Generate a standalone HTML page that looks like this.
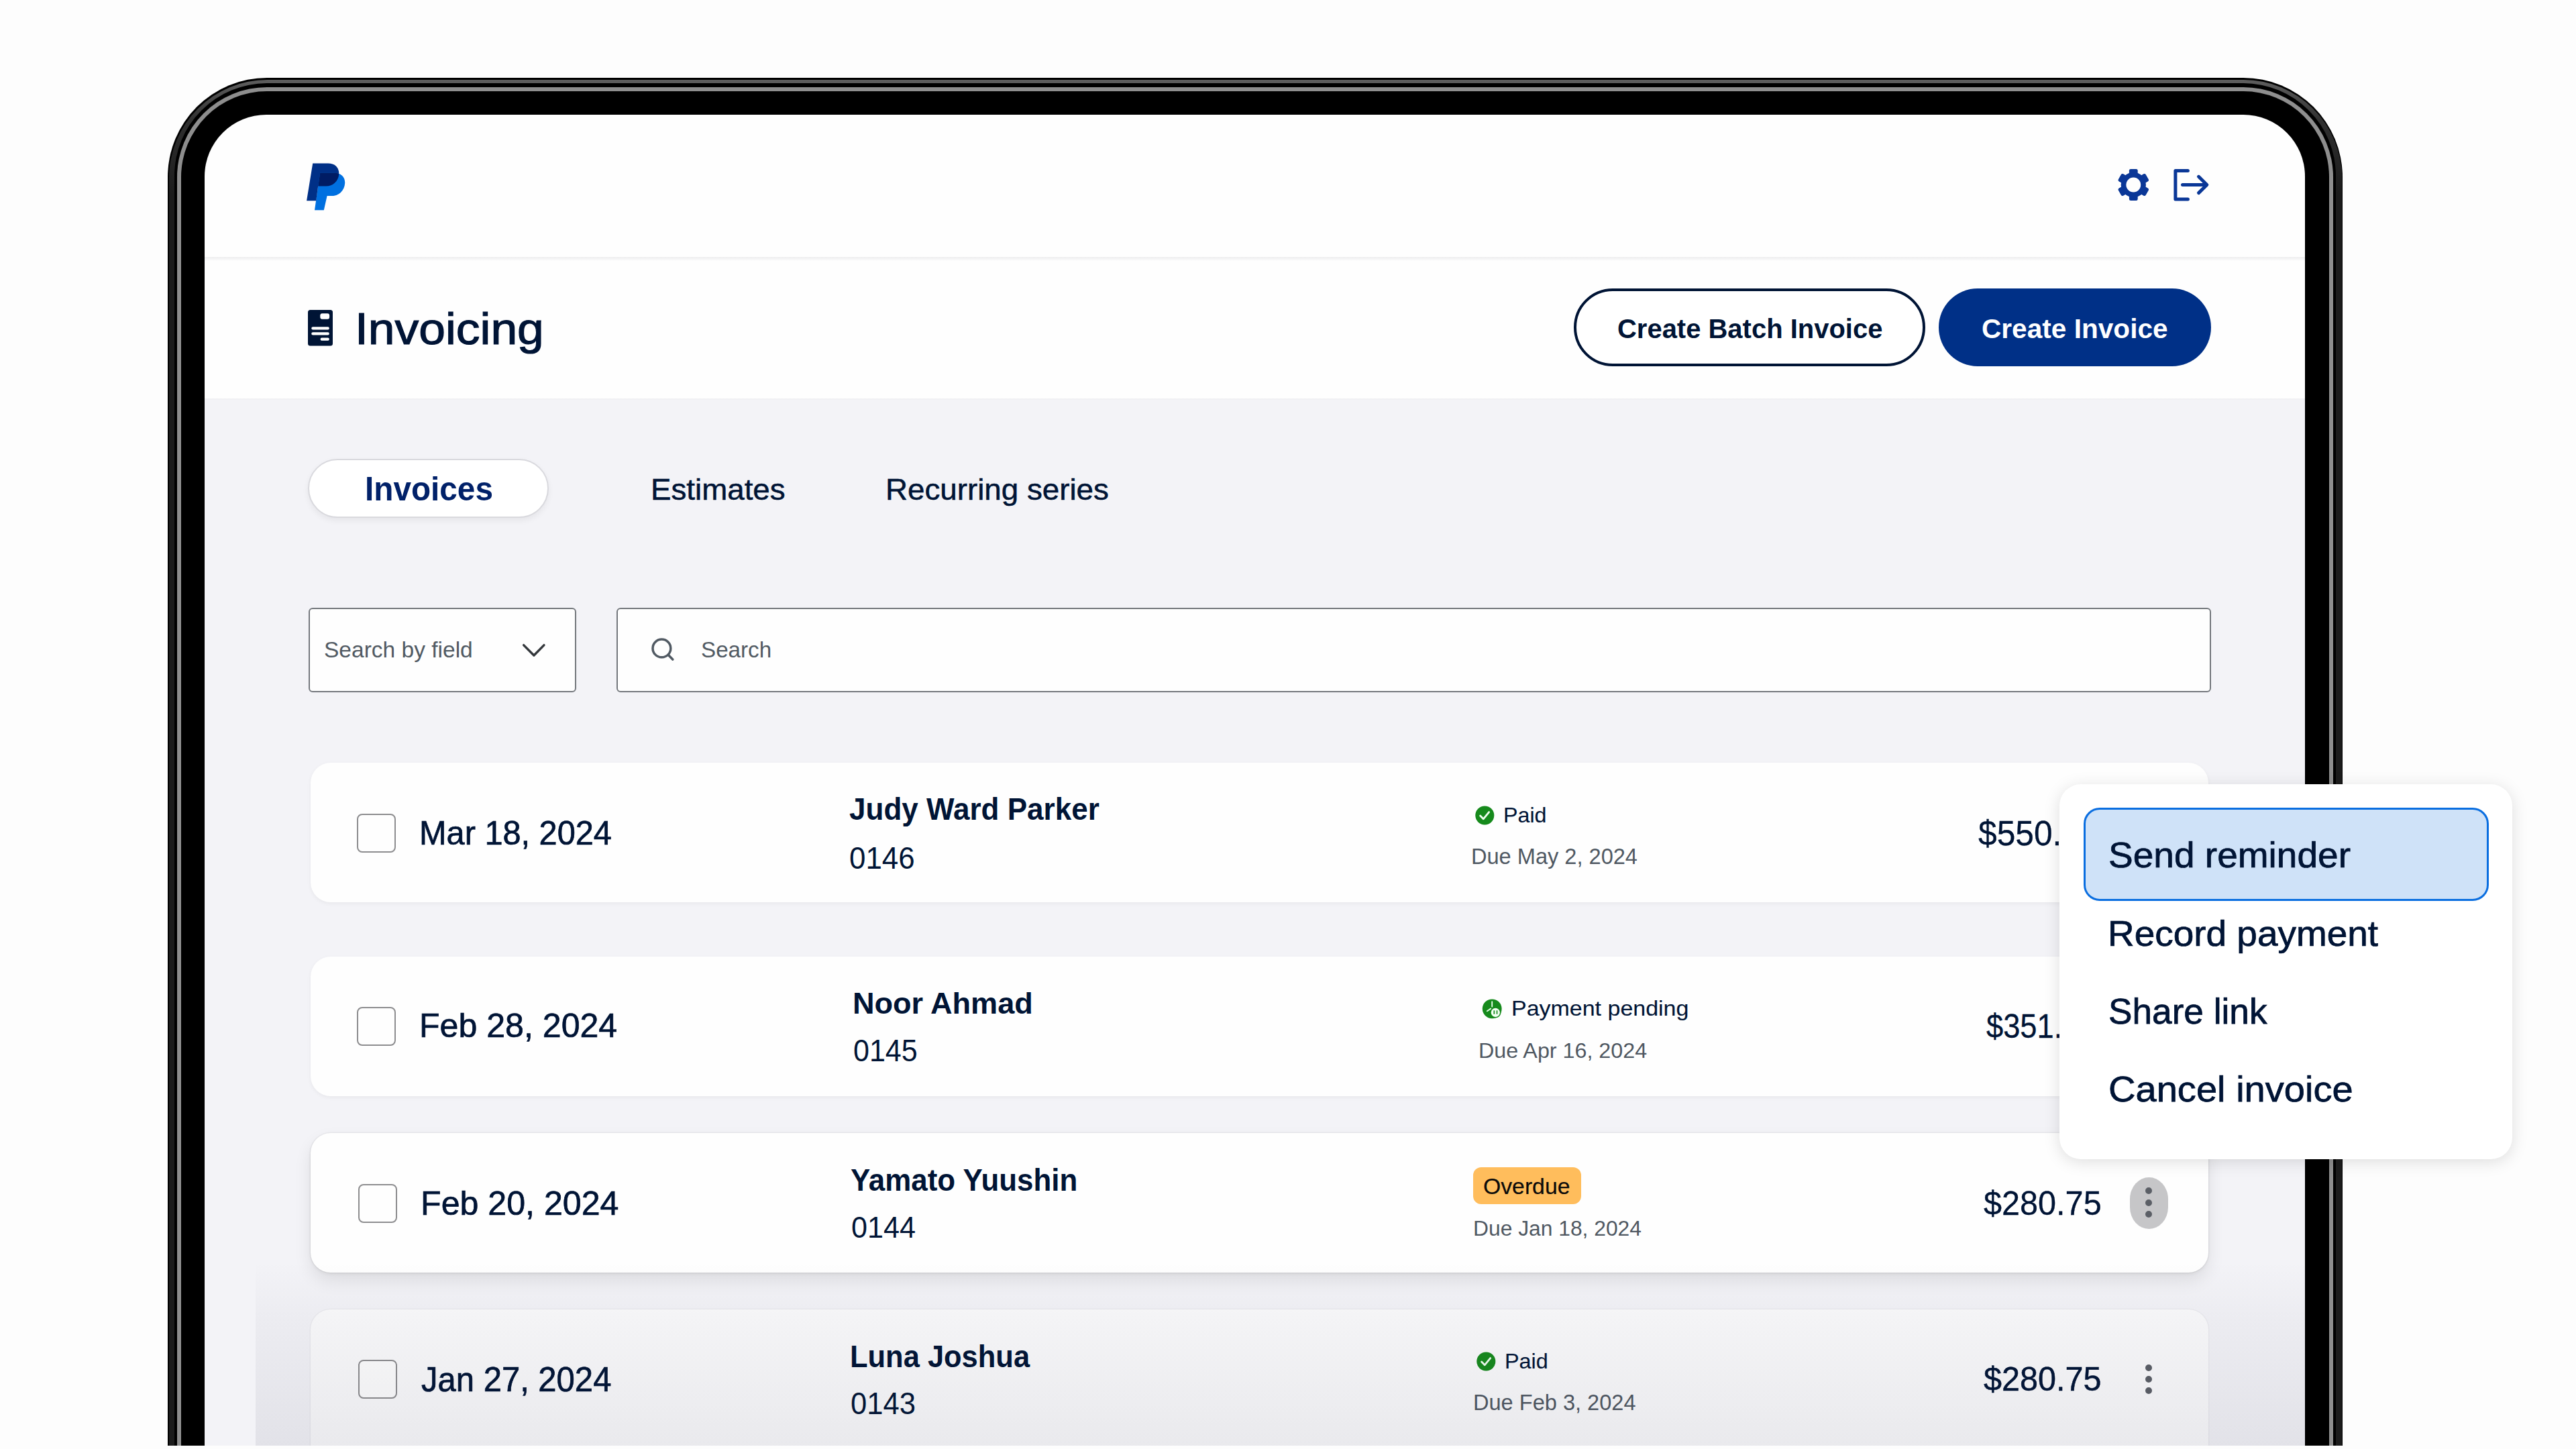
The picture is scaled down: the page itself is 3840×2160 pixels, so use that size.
<!DOCTYPE html>
<html><head><meta charset="utf-8"><style>
html,body{margin:0;padding:0;width:3840px;height:2160px;overflow:hidden;background:#fdfdfd;position:relative;font-family:"Liberation Sans",sans-serif}
.t{position:absolute;line-height:1;white-space:nowrap;transform-origin:0 0}
#f1{position:absolute;left:250px;top:116px;width:3242px;height:2300px;border-radius:148px;background:#000}
#f2{position:absolute;left:251.5px;top:118.7px;width:3239px;height:2300px;border-radius:146.5px;background:linear-gradient(to bottom,#5e5e5e 0px,#5a5a5a 6px,#303030 60px,#1c1c1c 170px)}
#f3{position:absolute;left:260px;top:124.2px;width:3222px;height:2300px;border-radius:138px;background:#000}
#f4{position:absolute;left:263.8px;top:129.9px;width:3214.4px;height:2300px;border-radius:134px;background:#8e8e8e}
#f5{position:absolute;left:269.6px;top:135.6px;width:3202.8px;height:2300px;border-radius:128px;background:#000}
#screen{position:absolute;left:305.4px;top:170.8px;width:3130.8px;height:2300px;border-radius:92px;background:#fefefe;overflow:hidden}
#wrap{position:absolute;left:-305.4px;top:-170.8px;width:3840px;height:2500px}
#bottomcut{position:absolute;left:0;top:2155px;width:3840px;height:5px;background:#fdfdfd}
</style></head><body>
<div id="f1"></div><div id="f2"></div><div id="f3"></div><div id="f4"></div><div id="f5"></div>
<div id="screen"><div id="wrap">
<div style="position:absolute;left:300px;top:382.5px;width:3140px;height:6.5px;background:linear-gradient(#eeeeef,#f2f2f3 35%,#fefefe)"></div>
<div style="position:absolute;left:300px;top:593.5px;width:3140px;height:2000px;background:linear-gradient(#efeff2,#f3f3f7 3px)"></div>
<svg style="position:absolute;left:440px;top:230px" width="80" height="90" viewBox="0 0 80 90">
<defs><clipPath id="cpB"><path d="M26.2,13.5 H49 C60.5,13.5 66,21 65.2,30 C64.3,40 56.5,47.6 46,47.6 H34.2 L31.2,69.2 H17.1 Z"/></clipPath></defs>
<path fill="#003087" d="M26.2,13.5 H49 C60.5,13.5 66,21 65.2,30 C64.3,40 56.5,47.6 46,47.6 H34.2 L31.2,69.2 H17.1 Z"/>
<path fill="#0070e0" d="M37.2,27.6 H58 C68,27.6 74.6,34 74.2,43 C73.6,54 65,62.1 55,62.1 H47.6 L42.8,83.2 H29 Z"/>
<path fill="#001c64" clip-path="url(#cpB)" d="M37.2,27.6 H58 C68,27.6 74.6,34 74.2,43 C73.6,54 65,62.1 55,62.1 H47.6 L42.8,83.2 H29 Z"/>
</svg>
<svg style="position:absolute;left:3150px;top:245px" width="60" height="60" viewBox="0 0 60 60">
<g transform="translate(30.3,30.5)" fill="#0a3797">
<circle r="18.6"/>
<rect x="-6.4" y="-23.6" width="12.8" height="12" rx="2.4"/>
<rect x="-6.4" y="-23.6" width="12.8" height="12" rx="2.4" transform="rotate(60)"/>
<rect x="-6.4" y="-23.6" width="12.8" height="12" rx="2.4" transform="rotate(120)"/>
<rect x="-6.4" y="-23.6" width="12.8" height="12" rx="2.4" transform="rotate(180)"/>
<rect x="-6.4" y="-23.6" width="12.8" height="12" rx="2.4" transform="rotate(240)"/>
<rect x="-6.4" y="-23.6" width="12.8" height="12" rx="2.4" transform="rotate(300)"/>
<circle r="10.9" fill="#fefefe"/>
</g></svg>
<svg style="position:absolute;left:3230px;top:245px" width="70" height="60" viewBox="0 0 70 60">
<g fill="none" stroke="#0a3797" stroke-width="5" stroke-linecap="round" stroke-linejoin="round">
<path d="M31.4,9.4 H12.9 V52.1 H31.4"/>
<path d="M23.5,30.5 H58.5"/><path d="M47.5,18.3 L59.8,30.5 L47.5,42.6"/>
</g></svg>
<svg style="position:absolute;left:459px;top:462px" width="37" height="54" viewBox="0 0 37 54">
<rect x="0" y="0" width="37" height="53.5" rx="3.5" fill="#001435"/>
<rect x="18.3" y="5.2" width="13.8" height="8.6" rx="3" fill="#fff"/>
<rect x="5.3" y="25.3" width="26.5" height="4.1" rx="2" fill="#fff"/>
<rect x="5.3" y="33.3" width="26.5" height="4.1" rx="2" fill="#fff"/>
<rect x="18.6" y="41.5" width="13.2" height="4.2" rx="2" fill="#fff"/>
</svg>
<div style="position:absolute;left:2346px;top:430px;width:524px;height:116px;box-sizing:border-box;border:4px solid #001435;border-radius:58px;background:#fff"></div>
<div style="position:absolute;left:2890px;top:430px;width:406px;height:116px;border-radius:58px;background:#003087"></div>
<div style="position:absolute;left:459px;top:684px;width:359px;height:88px;box-sizing:border-box;border:2px solid #d9d9de;border-radius:44px;background:#fff;box-shadow:0 4px 10px rgba(0,0,0,0.06)"></div>
<div style="position:absolute;left:460px;top:906px;width:399px;height:126px;box-sizing:border-box;border:2.5px solid #74787d;border-radius:6px;background:#fefefe"></div>
<svg style="position:absolute;left:775px;top:955px" width="42" height="30" viewBox="0 0 42 30"><path d="M5.6,6.6 L20.9,22 L36,6.6" fill="none" stroke="#33373b" stroke-width="3.4" stroke-linecap="round" stroke-linejoin="round"/></svg>
<div style="position:absolute;left:919px;top:906px;width:2377px;height:126px;box-sizing:border-box;border:2.5px solid #74787d;border-radius:6px;background:#fefefe"></div>
<svg style="position:absolute;left:965px;top:943px" width="48" height="48" viewBox="0 0 48 48"><circle cx="21.4" cy="23.4" r="13.4" fill="none" stroke="#515a63" stroke-width="3.5"/><path d="M31.4,33.6 L37.8,40" stroke="#515a63" stroke-width="3.6" stroke-linecap="round"/></svg>
<div style="position:absolute;left:463px;top:1137px;width:2829px;height:208px;border-radius:30px;background:#fefefe;box-shadow:0 2px 6px rgba(0,0,0,0.05)"></div>
<div style="position:absolute;left:532px;top:1213px;width:58px;height:58px;box-sizing:border-box;border:2.5px solid #8d8d8f;border-radius:8px;background:#fefefe"></div>
<svg style="position:absolute;left:2199px;top:1200.5px" width="30" height="30" viewBox="0 0 30 30"><circle cx="14.3" cy="14.5" r="14" fill="#168a1c"/><path d="M7.6,15 L12.2,19.8 L20.6,9.6" fill="none" stroke="#f0fff0" stroke-width="2.8" stroke-linecap="round" stroke-linejoin="round"/></svg>
<div style="position:absolute;left:463px;top:1426px;width:2829px;height:208px;border-radius:30px;background:#fefefe;box-shadow:0 2px 6px rgba(0,0,0,0.05)"></div>
<div style="position:absolute;left:532px;top:1501px;width:58px;height:58px;box-sizing:border-box;border:2.5px solid #8d8d8f;border-radius:8px;background:#fefefe"></div>
<svg style="position:absolute;left:2209px;top:1488px" width="34" height="34" viewBox="0 0 34 34"><circle cx="15.2" cy="15.8" r="14.4" fill="#168a1c"/><path d="M15.2,5.2 V12.6 M13.2,15.6 L7.8,19.2" fill="none" stroke="#e8ffe8" stroke-width="1.9" stroke-linecap="round"/><circle cx="20.3" cy="21.3" r="8.2" fill="#168a1c"/><circle cx="20.3" cy="21.3" r="6.6" fill="#f4fff4"/><path d="M18.3,18.2 V23.8 M22.5,18.2 V23.8" stroke="#168a1c" stroke-width="1.7"/></svg>
<div style="position:absolute;left:463px;top:1689px;width:2829px;height:208px;border-radius:30px;background:#fefefe;box-shadow:0 12px 26px rgba(0,0,0,0.09), 0 2px 5px rgba(0,0,0,0.06), 0 0 0 1.5px rgba(0,0,0,0.035)"></div>
<div style="position:absolute;left:534px;top:1765px;width:58px;height:58px;box-sizing:border-box;border:2.5px solid #8d8d8f;border-radius:8px;background:#fefefe"></div>
<div style="position:absolute;left:2196px;top:1740px;width:161px;height:55px;border-radius:12px;background:#ffbd5c"></div>
<div style="position:absolute;left:3174.7px;top:1755.2px;width:57.1px;height:77px;border-radius:50% / 42%;background:#c6c6c8"></div>
<div style="position:absolute;left:3197.9px;top:1770.1px;width:10px;height:10px;border-radius:50%;background:#5b5f66"></div>
<div style="position:absolute;left:3197.9px;top:1787.9px;width:10px;height:10px;border-radius:50%;background:#5b5f66"></div>
<div style="position:absolute;left:3197.9px;top:1805.3px;width:10px;height:10px;border-radius:50%;background:#5b5f66"></div>
<div style="position:absolute;left:463px;top:1952px;width:2829px;height:300px;border-radius:30px;background:#fbfbfc;box-shadow:0 0 0 1.5px rgba(0,0,0,0.03)"></div>
<div style="position:absolute;left:534px;top:2027px;width:58px;height:58px;box-sizing:border-box;border:2.5px solid #8d8d8f;border-radius:8px;background:#fefefe"></div>
<svg style="position:absolute;left:2201px;top:2014.8px" width="30" height="30" viewBox="0 0 30 30"><circle cx="14.3" cy="14.5" r="14" fill="#168a1c"/><path d="M7.6,15 L12.2,19.8 L20.6,9.6" fill="none" stroke="#f0fff0" stroke-width="2.8" stroke-linecap="round" stroke-linejoin="round"/></svg>
<div style="position:absolute;left:3197.8px;top:2033.5px;width:10.4px;height:10.4px;border-radius:50%;background:#5b5f66"></div>
<div style="position:absolute;left:3197.8px;top:2050.9px;width:10.4px;height:10.4px;border-radius:50%;background:#5b5f66"></div>
<div style="position:absolute;left:3197.8px;top:2067.8px;width:10.4px;height:10.4px;border-radius:50%;background:#5b5f66"></div>
<div class="t" style="left:528.89px;top:456.61px;font-size:66.14px;font-weight:400;color:#001435;transform:scaleX(1.0798);-webkit-text-stroke:1.19px #001435;">Invoicing</div>
<div class="t" style="left:2410.60px;top:469.77px;font-size:40.79px;font-weight:700;color:#001435;transform:scaleX(0.9800);">Create Batch Invoice</div>
<div class="t" style="left:2953.88px;top:469.77px;font-size:40.79px;font-weight:700;color:#ffffff;transform:scaleX(0.9956);">Create Invoice</div>
<div class="t" style="left:543.76px;top:704.83px;font-size:49.82px;font-weight:700;color:#012169;transform:scaleX(0.9577);">Invoices</div>
<div class="t" style="left:969.54px;top:706.74px;font-size:45.20px;font-weight:400;color:#001435;transform:scaleX(1.0111);-webkit-text-stroke:0.54px #001435;">Estimates</div>
<div class="t" style="left:1320.44px;top:706.74px;font-size:45.20px;font-weight:400;color:#001435;transform:scaleX(1.0118);-webkit-text-stroke:0.54px #001435;">Recurring series</div>
<div class="t" style="left:483.32px;top:952.07px;font-size:33.94px;font-weight:400;color:#515a63;transform:scaleX(0.9882);">Search by field</div>
<div class="t" style="left:1045.14px;top:952.07px;font-size:33.94px;font-weight:400;color:#515a63;transform:scaleX(0.9786);">Search</div>
<div class="t" style="left:624.70px;top:1217.22px;font-size:50.18px;font-weight:400;color:#001435;transform:scaleX(0.9706);-webkit-text-stroke:0.70px #001435;">Mar 18, 2024</div>
<div class="t" style="left:1265.72px;top:1184.35px;font-size:45.30px;font-weight:700;color:#001435;transform:scaleX(0.9720);">Judy Ward Parker</div>
<div class="t" style="left:1266.44px;top:1255.69px;font-size:46.32px;font-weight:400;color:#001435;transform:scaleX(0.9473);">0146</div>
<div class="t" style="left:2241.42px;top:1199.31px;font-size:32.24px;font-weight:400;color:#001435;transform:scaleX(0.9988);-webkit-text-stroke:0.13px #001435;">Paid</div>
<div class="t" style="left:2193.29px;top:1261.36px;font-size:32.77px;font-weight:400;color:#4f5862;transform:scaleX(0.9937);">Due May 2, 2024</div>
<div class="t" style="left:2948.50px;top:1216.76px;font-size:51.20px;font-weight:400;color:#001435;transform:scaleX(0.9710);-webkit-text-stroke:0.31px #001435;">$550.</div>
<div class="t" style="left:625.29px;top:1505.39px;font-size:49.75px;font-weight:400;color:#001435;transform:scaleX(1.0068);-webkit-text-stroke:0.70px #001435;">Feb 28, 2024</div>
<div class="t" style="left:1270.94px;top:1472.90px;font-size:45.01px;font-weight:700;color:#001435;transform:scaleX(1.0015);">Noor Ahmad</div>
<div class="t" style="left:1271.88px;top:1543.95px;font-size:45.30px;font-weight:400;color:#001435;transform:scaleX(0.9500);">0145</div>
<div class="t" style="left:2252.58px;top:1487.77px;font-size:31.23px;font-weight:400;color:#001435;transform:scaleX(1.0881);-webkit-text-stroke:0.12px #001435;">Payment pending</div>
<div class="t" style="left:2203.82px;top:1549.55px;font-size:32.19px;font-weight:400;color:#4f5862;transform:scaleX(1.0028);">Due Apr 16, 2024</div>
<div class="t" style="left:2960.65px;top:1505.02px;font-size:50.18px;font-weight:400;color:#001435;transform:scaleX(0.9021);-webkit-text-stroke:0.30px #001435;">$351.</div>
<div class="t" style="left:627.39px;top:1769.77px;font-size:49.89px;font-weight:400;color:#001435;transform:scaleX(1.0053);-webkit-text-stroke:0.70px #001435;">Feb 20, 2024</div>
<div class="t" style="left:1268.32px;top:1736.53px;font-size:45.45px;font-weight:700;color:#001435;transform:scaleX(0.9662);">Yamato Yuushin</div>
<div class="t" style="left:1268.87px;top:1808.34px;font-size:44.72px;font-weight:400;color:#001435;transform:scaleX(0.9652);">0144</div>
<div class="t" style="left:2211.15px;top:1751.99px;font-size:33.21px;font-weight:400;color:#0a0a0a;transform:scaleX(1.0162);-webkit-text-stroke:0.20px #0a0a0a;">Overdue</div>
<div class="t" style="left:2195.66px;top:1815.27px;font-size:32.05px;font-weight:400;color:#4f5862;transform:scaleX(0.9918);">Due Jan 18, 2024</div>
<div class="t" style="left:2957.31px;top:1768.55px;font-size:50.62px;font-weight:400;color:#001435;transform:scaleX(0.9602);-webkit-text-stroke:0.30px #001435;">$280.75</div>
<div class="t" style="left:627.51px;top:2030.56px;font-size:51.91px;font-weight:400;color:#001435;transform:scaleX(0.9441);-webkit-text-stroke:0.73px #001435;">Jan 27, 2024</div>
<div class="t" style="left:1266.56px;top:1998.79px;font-size:46.32px;font-weight:700;color:#001435;transform:scaleX(0.9385);">Luna Joshua</div>
<div class="t" style="left:1267.86px;top:2069.78px;font-size:45.74px;font-weight:400;color:#001435;transform:scaleX(0.9522);">0143</div>
<div class="t" style="left:2243.01px;top:2013.55px;font-size:31.95px;font-weight:400;color:#001435;transform:scaleX(1.0129);-webkit-text-stroke:0.13px #001435;">Paid</div>
<div class="t" style="left:2195.80px;top:2075.26px;font-size:32.77px;font-weight:400;color:#4f5862;transform:scaleX(0.9935);">Due Feb 3, 2024</div>
<div class="t" style="left:2956.91px;top:2031.24px;font-size:50.04px;font-weight:400;color:#001435;transform:scaleX(0.9702);-webkit-text-stroke:0.50px #001435;">$280.75</div>
<div style="position:absolute;left:381px;top:1880px;width:3060px;height:290px;background:linear-gradient(rgba(40,40,70,0) 0%,rgba(40,40,70,0.035) 30%,rgba(40,40,70,0.085) 100%)"></div>
</div></div>
<div style="position:absolute;left:3070px;top:1169px;width:675px;height:559px;border-radius:32px;background:#fff;box-shadow:0 4px 24px rgba(0,0,0,0.13)"></div>
<div style="position:absolute;left:3106px;top:1204px;width:604px;height:138.5px;box-sizing:border-box;border:3.5px solid #0a6ee0;border-radius:24px;background:#cfe2f8"></div>
<div class="t" style="left:3142.50px;top:1248.60px;font-size:52.92px;font-weight:400;color:#001435;transform:scaleX(1.0403);-webkit-text-stroke:0.74px #001435;">Send reminder</div>
<div class="t" style="left:3142.30px;top:1365.38px;font-size:53.06px;font-weight:400;color:#001435;transform:scaleX(1.0357);-webkit-text-stroke:0.74px #001435;">Record payment</div>
<div class="t" style="left:3142.67px;top:1480.79px;font-size:53.64px;font-weight:400;color:#001435;transform:scaleX(0.9920);-webkit-text-stroke:0.75px #001435;">Share link</div>
<div class="t" style="left:3142.96px;top:1597.17px;font-size:53.79px;font-weight:400;color:#001435;transform:scaleX(1.0427);-webkit-text-stroke:0.75px #001435;">Cancel invoice</div>
<div id="bottomcut"></div>
</body></html>
